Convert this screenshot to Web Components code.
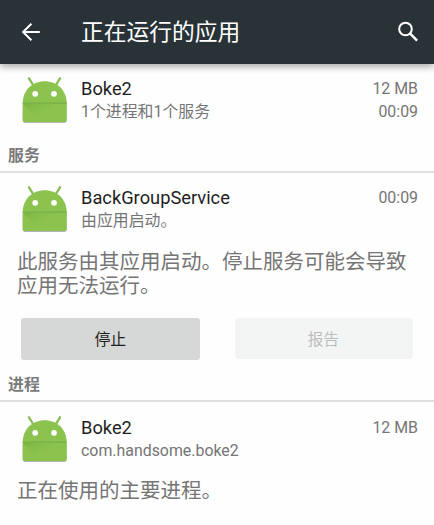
<!DOCTYPE html>
<html lang="zh-CN">
<head>
<meta charset="utf-8">
<title>正在运行的应用</title>
<style>
body{margin:0;background:#fefefe;font-family:Roboto,"Noto Sans CJK SC",sans-serif;color:#757575;width:434px;height:525px;overflow:hidden}
</style>
</head>
<body>
<running-apps></running-apps>
<script>
const define = (name, html) => customElements.define(name, class extends HTMLElement {
  constructor() {
    super();
    this.attachShadow({mode: 'open'}).innerHTML = html;
  }
});

define('app-bar', `<style>
:host{display:flex;align-items:center;box-sizing:border-box;height:64px;padding:0 14px 0 18px;background:#283237;color:#fff;position:relative;box-shadow:0 3px 7px 0 rgba(0,0,0,.33)}
svg{display:block;width:24px;height:24px;flex:none}
.title{flex:1;margin-left:39px;padding-top:2px;font-size:22.750px;line-height:30px;white-space:nowrap}
</style>
<svg viewBox="0 0 24 24"><path d="M21.800 12H5M13.400 3.800L5.100 12l8.300 8.200" fill="none" stroke="#fff" stroke-width="2"/></svg>
<div class="title"><slot></slot></div>
<svg viewBox="0 0 24 24"><circle cx="9.500" cy="9" r="6.300" fill="none" stroke="#fff" stroke-width="2"/><path d="M14.200 13.700l6.900 7" stroke="#fff" stroke-width="2.500"/></svg>`);

define('android-icon', `<style>
:host{display:block;width:48px;height:50px}
svg{display:block}
</style>
<svg width="48" height="50" viewBox="0 0 48 50">
<defs><linearGradient id="fold" x1="0" y1="0" x2=".8" y2="1"><stop offset="0" stop-color="#7bb045"/><stop offset=".75" stop-color="#8bc34a" stop-opacity="0"/></linearGradient></defs>
<path d="M1.700 28.500h44v16q0 2.400-2.200 2.400H3.900q-2.200 0-2.200-2.400z" fill="#777" opacity=".55"/>
<path d="M8 2.300l5 8.200M39 2.300l-5 8.200" stroke="#8abc51" stroke-width="2.300" stroke-linecap="round"/>
<path d="M1.700 27.500C1.700 14 11.500 5.200 23.700 5.200S45.700 14 45.700 27.500V43.900q0 2.200-2.200 2.200H3.900q-2.200 0-2.200-2.200z" fill="#8bc34e"/>
<path d="M1.700 26.500h44v1.200h-44z" fill="#79ad48"/>
<path d="M2 27.500h31L19 45.800z" fill="url(#fold)"/>
<circle cx="14.200" cy="17.800" r="2.900" fill="#fff"/><circle cx="33" cy="17.800" r="2.900" fill="#fff"/>
</svg>`);

define('app-row', `<style>
:host{display:grid;box-sizing:border-box;grid-template-columns:48px 1fr auto;column-gap:12px;padding:12px 16px 0 21px}
.text,.info{display:grid;grid-template-rows:23px 23px;align-content:start;line-height:23px;white-space:nowrap;padding-top:1px}
.text{font-size:15.9px}
.name{font-size:18.300px;color:#1e1e1e}
.info{font-size:15.900px;text-align:right}
</style>
<android-icon></android-icon>
<div class="text"><div class="name"><slot name="name"></slot></div><div><slot name="detail"></slot></div></div>
<div class="info"><div><slot name="size"></slot></div><div><slot name="time"></slot></div></div>`);

define('section-title', `<style>
:host{display:block;box-sizing:border-box;height:34px;padding-left:8px;border-bottom:2px solid #dfdfdf;font-size:15.900px;line-height:34px;font-weight:700;color:#7a7a7a}
</style><slot></slot>`);

define('note-text', `<style>
:host{display:block;padding-left:17px;font-size:20.500px;line-height:24px;white-space:nowrap}
</style><slot></slot>`);

define('action-button', `<style>
:host{display:block}
button{display:block;width:100%;height:42px;padding:1px 1px 0 0;border:0;border-radius:3px;background:#d6d8d7;color:#1f1f1f;font:400 15.900px/42px Roboto,"Noto Sans CJK SC",sans-serif}
:host([disabled]) button{height:41px;background:#f3f5f4;color:#bcbebd}
</style><button><slot></slot></button>`);

define('running-apps', `<style>
:host{display:block}
.first{height:75px}
.service{height:77px}
.process{height:77px;padding-top:13px}
.buttons{display:grid;box-sizing:border-box;grid-template-columns:179px 178px;column-gap:34.500px;padding:20px 0 0 21.300px;height:70px}
</style>
<app-bar>正在运行的应用</app-bar>
<app-row class="first"><span slot="name">Boke2</span><span slot="detail">1个进程和1个服务</span><span slot="size">12 MB</span><span slot="time">00:09</span></app-row>
<section-title>服务</section-title>
<app-row class="service"><span slot="name">BackGroupService</span><span slot="detail">由应用启动。</span><span slot="size">00:09</span></app-row>
<note-text>此服务由其应用启动。停止服务可能会导致<br>应用无法运行。</note-text>
<div class="buttons"><action-button>停止</action-button><action-button disabled>报告</action-button></div>
<section-title>进程</section-title>
<app-row class="process"><span slot="name">Boke2</span><span slot="detail">com.handsome.boke2</span><span slot="size">12 MB</span></app-row>
<note-text>正在使用的主要进程。</note-text>`);
</script>
</body>
</html>
